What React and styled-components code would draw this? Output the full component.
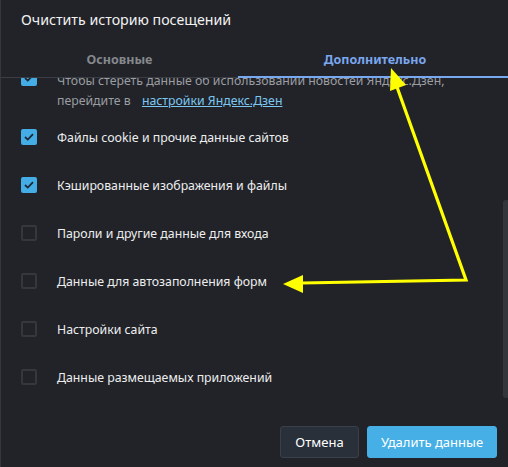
import styled, { createGlobalStyle } from 'styled-components';

const GlobalStyle = createGlobalStyle`
    html, body {
        margin: 0;
        padding: 0;
        background: #212329;
        font-family: "Segoe UI", "Noto Sans", "Open Sans", sans-serif;
    }
`;

const Dialog = styled.div`
    position: relative;
    width: 508px;
    height: 467px;
    box-sizing: border-box;
    border-left: 1px solid #34373d;
    background: #212329;
    display: flex;
    flex-direction: column;
    overflow: hidden;
`;

const Title = styled.h1`
    margin: 0;
    padding: 10px 0 0 20px;
    height: 30px;
    font-size: 14.2px;
    font-weight: 400;
    line-height: 20px;
    color: #f2f2f2;
`;

const Tabs = styled.div`
    display: flex;
    height: 37px;
    border-bottom: 1px solid #3a3d43;
`;

const Tab = styled.div`
    flex: ${p => (p.$active ? 1 : '0 0 237px')};
    display: flex;
    align-items: center;
    justify-content: center;
    padding-top: 2px;
    padding-left: ${p => (p.$active ? '4px' : '0')};
    box-sizing: border-box;
    margin-bottom: -1px;
    border-bottom: 2px solid ${p => (p.$active ? '#78a9f0' : 'transparent')};
    font-size: 12.5px;
    font-weight: 700;
    color: ${p => (p.$active ? '#7aa6ee' : '#86888c')};
`;

const Content = styled.div`
    height: 332px;
    overflow: hidden;
`;

const List = styled.div`
    margin-top: -8px;
    display: flex;
    flex-direction: column;
`;

const Row = styled.label`
    display: flex;
    align-items: ${p => (p.$top ? 'flex-start' : 'center')};
    gap: 20px;
    min-height: ${p => (p.$top ? '43px' : '48px')};
    padding-left: 20px;
    font-size: 12.3px;
    color: #eeeeee;
`;

const Box = styled.span`
    flex: 0 0 16px;
    width: 16px;
    height: 16px;
    box-sizing: border-box;
    border-radius: 2px;
    display: flex;
    align-items: center;
    justify-content: center;
    background: ${p => (p.$checked ? '#45ade6' : 'transparent')};
    border: ${p => (p.$checked ? 'none' : '2px solid #34373c')};
`;

const Note = styled.div`
    padding-top: 1px;
    line-height: 20px;
    color: #9b9da1;
`;

const Link = styled.a`
    margin-left: 8px;
    color: #7cc8f2;
    text-decoration: underline;
`;

const Thumb = styled.div`
    position: absolute;
    right: 0;
    top: 200px;
    width: 5px;
    height: 198px;
    border-radius: 3px 0 0 3px;
    background: #33363b;
`;

const Footer = styled.div`
    flex: 1;
    display: flex;
    justify-content: flex-end;
    align-items: flex-start;
    gap: 8px;
    padding: 16px 11px 0 0;
`;

const Button = styled.button`
    width: ${p => (p.$primary ? '130px' : '79px')};
    height: 32px;
    padding: 0;
    border-radius: 3px;
    font-family: inherit;
    font-size: 13px;
    color: #ffffff;
    background: ${p => (p.$primary ? '#46afe5' : '#29303a')};
    border: 1px solid ${p => (p.$primary ? '#46afe5' : '#3a4049')};
`;

const Overlay = styled.svg`
    position: absolute;
    left: 0;
    top: 0;
    pointer-events: none;
`;

const Check = () => (
    <svg width="10" height="8" viewBox="0 0 10 8">
        <path d="M1 4 L3.8 6.6 L9 1.2" fill="none" stroke="#1d2833" strokeWidth="1.8" />
    </svg>
);

const items = [
    { label: 'Файлы cookie и прочие данные сайтов', checked: true },
    { label: 'Кэшированные изображения и файлы', checked: true },
    { label: 'Пароли и другие данные для входа', checked: false },
    { label: 'Данные для автозаполнения форм', checked: false },
    { label: 'Настройки сайта', checked: false },
    { label: 'Данные размещаемых приложений', checked: false },
];

const App = () => (
    <>
        <GlobalStyle />
        <Dialog>
            <Title>Очистить историю посещений</Title>
            <Tabs>
                <Tab>Основные</Tab>
                <Tab $active>Дополнительно</Tab>
            </Tabs>
            <Content>
                <List>
                    <Row $top>
                        <Box $checked>
                            <Check />
                        </Box>
                        <Note>
                            Чтобы стереть данные об использовании новостей Яндекс.Дзен,
                            <br />
                            перейдите в <Link>настройки Яндекс.Дзен</Link>
                        </Note>
                    </Row>
                    {items.map(item => (
                        <Row key={item.label}>
                            <Box $checked={item.checked}>{item.checked && <Check />}</Box>
                            {item.label}
                        </Row>
                    ))}
                </List>
            </Content>
            <Footer>
                <Button>Отмена</Button>
                <Button $primary>Удалить данные</Button>
            </Footer>
            <Thumb />
            <Overlay width="508" height="467">
                <g stroke="#ffff00" strokeWidth="3.2" fill="none" strokeLinejoin="miter">
                    <polyline points="396,87 465,280 301,283" />
                </g>
                <polygon points="390,68 405,85 389,91" fill="#ffff00" />
                <polygon points="282,284 302,275 302,293" fill="#ffff00" />
            </Overlay>
        </Dialog>
    </>
);

export default App;
